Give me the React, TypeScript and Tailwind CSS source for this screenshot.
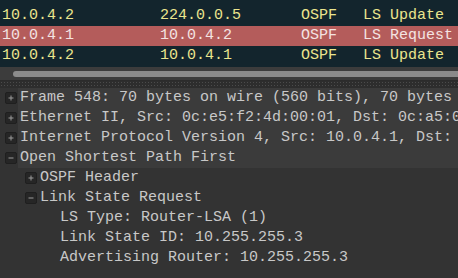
import React from "react";

const mono = { fontFamily: '"Liberation Mono", "DejaVu Sans Mono", monospace' };

type Pkt = { src: string; dst: string; proto: string; info: string; sel?: boolean };

const packets: Pkt[] = [
  { src: "10.0.4.2", dst: "224.0.0.5", proto: "OSPF", info: "LS Update" },
  { src: "10.0.4.1", dst: "10.0.4.2", proto: "OSPF", info: "LS Request", sel: true },
  { src: "10.0.4.2", dst: "10.0.4.1", proto: "OSPF", info: "LS Update" },
];

type Node = { text: string; level: number; exp?: "plus" | "minus"; hl?: boolean };

const tree: Node[] = [
  { text: "Frame 548: 70 bytes on wire (560 bits), 70 bytes captured (560 bits) on interface 0", level: 0, exp: "plus", hl: true },
  { text: "Ethernet II, Src: 0c:e5:f2:4d:00:01, Dst: 0c:a5:08:6e:00:01", level: 0, exp: "plus", hl: true },
  { text: "Internet Protocol Version 4, Src: 10.0.4.1, Dst: 10.0.4.2", level: 0, exp: "plus", hl: true },
  { text: "Open Shortest Path First", level: 0, exp: "minus", hl: true },
  { text: "OSPF Header", level: 1, exp: "plus" },
  { text: "Link State Request", level: 1, exp: "minus" },
  { text: "LS Type: Router-LSA (1)", level: 2 },
  { text: "Link State ID: 10.255.255.3", level: 2 },
  { text: "Advertising Router: 10.255.255.3", level: 2 },
];

function Expander({ kind }: { kind: "plus" | "minus" }) {
  return (
    <svg width="12" height="12" viewBox="0 0 12 12" className="block">
      <rect x="0.5" y="0.5" width="11" height="11" rx="1.5" fill="#262626" stroke="#1f1f1f" />
      <line x1="3.5" y1="6" x2="8.5" y2="6" stroke="#9c9c9c" strokeWidth="1" />
      {kind === "plus" && <line x1="6" y1="3.5" x2="6" y2="8.5" stroke="#9c9c9c" strokeWidth="1" />}
    </svg>
  );
}

export default function App() {
  return (
    <div className="flex h-[278px] w-[458px] flex-col overflow-hidden bg-[#333333] text-[15px]" style={mono}>
      {/* packet list */}
      <div className="h-[67px] shrink-0 overflow-hidden bg-[#13252d] pt-[6px]">
        {packets.map((p, i) => (
          <div
            key={i}
            className={
              "flex h-5 items-center whitespace-pre leading-5 " +
              (p.sel ? "bg-[#b45c5b] text-[#f4e4e2]" : "text-[#ebe58e]")
            }
          >
            <span className="w-[160px] shrink-0 pl-[2px]">{p.src}</span>
            <span className="w-[141px] shrink-0">{p.dst}</span>
            <span className="w-[62px] shrink-0">{p.proto}</span>
            <span className="flex-1">{p.info}</span>
          </div>
        ))}
      </div>

      {/* horizontal scrollbar */}
      <div className="h-[14px] shrink-0 border-b border-[#2b2b2b] bg-[#3c3c3c] pt-[4px]">
        <div className="ml-[13px] h-[6px] rounded-l-full bg-[#8b8b8b]" />
      </div>

      {/* splitter */}
      <div className="h-[7px] shrink-0 bg-[#2d2d2d] bg-[radial-gradient(#4b4b4b_0.7px,transparent_0.8px)] bg-[length:3px_3px]" />

      {/* details tree */}
      <div className="flex-1 overflow-hidden bg-[#333333] text-[#c8c8c8]">
        {tree.map((n, i) => (
          <div key={i} className="flex h-5 items-center whitespace-pre leading-5" style={{ paddingLeft: n.level * 20 }}>
            <div className="flex w-[18px] shrink-0 items-center pl-[5px]">
              {n.exp && <Expander kind={n.exp} />}
            </div>
            <div className={"h-5 flex-1 overflow-hidden pl-[2px] " + (n.hl ? "bg-[#3b3b3b]" : "")}>{n.text}</div>
          </div>
        ))}
      </div>
    </div>
  );
}
